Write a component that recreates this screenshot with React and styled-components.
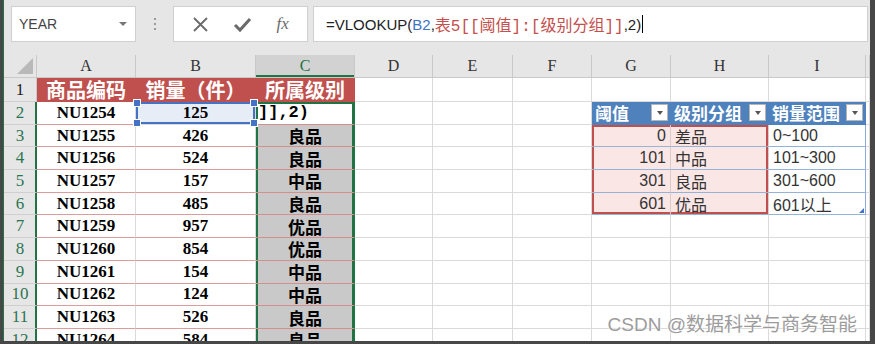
import styled, { createGlobalStyle } from 'styled-components';

const SERIF = `"Liberation Serif", "Noto Sans CJK SC", serif`;
const SANS = `"Liberation Sans", "Noto Sans CJK SC", sans-serif`;
const MONO = `"Liberation Mono", "Noto Sans CJK SC", monospace`;

const GREEN = '#217346';
const RED = '#c0504d';
const BLUE = '#4f81bd';
const GRID = '#dadada';

const GlobalStyle = createGlobalStyle`
  html, body {
    margin: 0;
    padding: 0;
    background: #fff;
  }
  body {
    width: 875px;
    height: 344px;
    overflow: hidden;
    font-family: ${SANS};
  }
`;

// inset edges drawn with box-shadow so cell sizes stay fixed
const edges = (color, w, { t, r, b, l }) => {
  const s = [];
  if (t) s.push(`inset 0 ${w}px 0 ${color}`);
  if (r) s.push(`inset -${w}px 0 0 ${color}`);
  if (b) s.push(`inset 0 -${w}px 0 ${color}`);
  if (l) s.push(`inset ${w}px 0 0 ${color}`);
  return s.length ? s.join(', ') : 'none';
};

const Frame = styled.div`
  position: relative;
  width: 875px;
  height: 344px;
  box-sizing: border-box;
  border-left: 3px solid #474747;
  border-right: 5px solid #474747;
  border-bottom: 3px solid #474747;
  padding-left: 1px;
  background: ${GREEN};
  display: flex;
  flex-direction: column;
  overflow: hidden;
`;

const Toolbar = styled.div`
  height: 55px;
  flex-shrink: 0;
  background: #e6e6e6;
  display: flex;
  align-items: flex-start;
  padding: 6px 2px 0 7px;
  box-sizing: border-box;
`;

const Box = styled.div`
  height: 36px;
  box-sizing: border-box;
  background: #fff;
  border: 1px solid #d0d0d0;
  display: flex;
  align-items: center;
`;

const NameBox = styled(Box)`
  width: 125px;
  padding: 0 8px 0 7px;
  justify-content: space-between;
  font-size: 14px;
  color: #444;
`;

const Caret = styled.span`
  width: 0;
  height: 0;
  border-left: 4px solid transparent;
  border-right: 4px solid transparent;
  border-top: 4px solid #777;
`;

const Grip = styled.div`
  width: 37px;
  height: 36px;
  display: flex;
  flex-direction: column;
  align-items: center;
  justify-content: center;
  gap: 3px;

  span {
    width: 2px;
    height: 2px;
    background: #9a9a9a;
  }
`;

const ButtonBox = styled(Box)`
  width: 135px;
  justify-content: space-around;
  padding: 0 6px;
  color: #6a6a6a;
`;

const Fx = styled.span`
  font-family: ${SERIF};
  font-style: italic;
  font-size: 17px;
  color: #6a6a6a;
`;

const FormulaBox = styled(Box)`
  flex: 1;
  margin-left: 5px;
  padding-left: 12px;
  font-size: 15px;
  color: #222;
  white-space: nowrap;
`;

const Ref = styled.span`
  color: ${(p) => (p.$tone === 'blue' ? '#3f73c4' : '#c4504e')};
  font-family: ${(p) => (p.$tone === 'blue' ? SANS : MONO)};
  font-size: ${(p) => (p.$tone === 'blue' ? '15px' : '16px')};
`;

const Cursor = styled.span`
  display: inline-block;
  width: 1px;
  height: 18px;
  background: #000;
  margin-left: 1px;
  vertical-align: -4px;
`;

const Sheet = styled.div`
  flex: 1;
  background: #fff;
  display: grid;
  grid-template-columns: 33px 99px 120px 99px 78px 80px 79px 79px 98px 97px 4px;
  grid-template-rows: 23px 24px repeat(11, 22.7px);
  overflow: hidden;
`;

const Cell = styled.div`
  box-sizing: border-box;
  border-right: 1px solid ${GRID};
  border-bottom: 1px solid ${GRID};
  display: flex;
  align-items: center;
  overflow: hidden;
  white-space: nowrap;
  min-width: 0;
`;

const ColHead = styled(Cell)`
  justify-content: center;
  background: ${(p) => (p.$active ? '#d2d2d2' : '#e6e6e6')};
  border-color: #c9c9c9;
  color: ${(p) => (p.$active ? GREEN : '#333')};
  box-shadow: ${(p) => (p.$active ? `inset 0 -2px 0 ${GREEN}` : 'none')};
  font-family: ${SERIF};
  font-size: 16px;
`;

const Corner = styled(Cell)`
  background: #e6e6e6;
  border-color: #c9c9c9;
  justify-content: flex-end;
  align-items: flex-end;
  padding: 0 3px 3px 0;

  &::after {
    content: '';
    width: 0;
    height: 0;
    border-left: 16px solid transparent;
    border-bottom: 16px solid #b9b9b9;
  }
`;

const RowHead = styled(Cell)`
  justify-content: center;
  background: #e6e6e6;
  border-color: #cfcfcf;
  border-right-color: ${(p) => (p.$active ? GREEN : '#c9c9c9')};
  box-shadow: ${(p) => (p.$active ? `inset -1px 0 0 ${GREEN}` : 'none')};
  color: ${(p) => (p.$active ? '#2c7552' : '#222')};
  font-family: ${SERIF};
  font-size: 17px;
`;

const TitleCell = styled(Cell)`
  justify-content: center;
  background: ${RED};
  border-color: ${RED};
  color: #fff;
  font-family: ${SERIF};
  font-weight: bold;
  font-size: 20px;
`;

const ItemCell = styled(Cell)`
  justify-content: center;
  border-bottom-color: #dc9c9b;
  font-family: ${SERIF};
  font-weight: bold;
  font-size: 17px;
  color: #000;
`;

const RefCell = styled(ItemCell)`
  position: relative;
  overflow: visible;
  background: #e7edf7;
  border-bottom-color: ${GRID};
  box-shadow: inset 0 0 0 2px #4472c4;
  z-index: 2;
`;

const Handle = styled.span`
  position: absolute;
  width: 6px;
  height: 6px;
  background: #4472c4;
  border: 1px solid #fff;
  ${(p) => (p.$y === 'top' ? 'top: -3px;' : 'bottom: -3px;')}
  ${(p) => (p.$x === 'left' ? 'left: -3px;' : 'right: -3px;')}
`;

const GradeCell = styled(Cell)`
  justify-content: ${(p) => (p.$editing ? 'flex-start' : 'center')};
  padding-left: ${(p) => (p.$editing ? '2px' : '0')};
  background: ${(p) => (p.$editing ? '#fff' : '#c9c9c9')};
  border-right-color: ${GREEN};
  border-bottom-color: #d28f8e;
  box-shadow: ${(p) => edges(GREEN, 2, { l: true, r: true, t: p.$editing })};
  font-family: ${(p) => (p.$editing ? MONO : SERIF)};
  font-weight: bold;
  font-size: 17px;
  color: #000;
`;

const TierHead = styled(Cell)`
  background: ${BLUE};
  border-color: ${BLUE};
  color: #fff;
  font-family: ${SERIF};
  font-weight: bold;
  font-size: 17px;
  padding: 0 2px 0 3px;
  gap: 2px;
`;

const HeadLabel = styled.span`
  flex: 1;
  min-width: 0;
  overflow: hidden;
`;

const FilterButton = styled.span`
  flex-shrink: 0;
  width: 17px;
  height: 17px;
  box-sizing: border-box;
  background: #fff;
  border: 1px solid #b5b5b5;
  display: flex;
  align-items: center;
  justify-content: center;

  &::after {
    content: '';
    width: 0;
    height: 0;
    border-left: 3.5px solid transparent;
    border-right: 3.5px solid transparent;
    border-top: 4px solid #555;
  }
`;

const TierCell = styled(Cell)`
  position: relative;
  overflow: visible;
  justify-content: ${(p) => (p.$align === 'right' ? 'flex-end' : 'flex-start')};
  padding: 0 4px;
  background: ${(p) => (p.$pink ? '#fbe6e6' : '#fff')};
  border-right-color: ${(p) => (p.$edge ? '#8eaadb' : '#d9cccc')};
  border-bottom-color: #95b3d7;
  box-shadow: ${(p) => edges(RED, 2, p.$box || {})};
  font-size: 16px;
  color: #333;
`;

const ResizeMark = styled.span`
  position: absolute;
  right: 1px;
  bottom: 1px;
  width: 0;
  height: 0;
  border-left: 5px solid transparent;
  border-bottom: 5px solid #4472c4;
`;

const Watermark = styled.div`
  position: absolute;
  right: 13px;
  bottom: 5px;
  font-family: ${SANS};
  font-size: 19px;
  color: #9c9c9c;
  text-shadow: 0 0 2px #fff, 0 0 2px #fff;
  pointer-events: none;
`;

const columns = ['A', 'B', 'C', 'D', 'E', 'F', 'G', 'H', 'I'];

const items = [
  ['NU1254', 125, null],
  ['NU1255', 426, '良品'],
  ['NU1256', 524, '良品'],
  ['NU1257', 157, '中品'],
  ['NU1258', 485, '良品'],
  ['NU1259', 957, '优品'],
  ['NU1260', 854, '优品'],
  ['NU1261', 154, '中品'],
  ['NU1262', 124, '中品'],
  ['NU1263', 526, '良品'],
  ['NU1264', 584, '良品'],
];

const tiers = [
  [0, '差品', '0~100'],
  [101, '中品', '101~300'],
  [301, '良品', '301~600'],
  [601, '优品', '601以上'],
];

function CloseIcon() {
  return (
    <svg width="17" height="17" viewBox="0 0 17 17">
      <path d="M2 2 L15 15 M15 2 L2 15" stroke="#6a6a6a" strokeWidth="1.8" fill="none" />
    </svg>
  );
}

function CheckIcon() {
  return (
    <svg width="19" height="17" viewBox="0 0 19 17">
      <path d="M2 9 L7 14 L17 3" stroke="#6a6a6a" strokeWidth="3" fill="none" />
    </svg>
  );
}

function TierRow({ tier, index }) {
  const first = index === 0;
  const last = index === tiers.length - 1;
  const [value, group, range] = tier;
  return (
    <>
      <TierCell $pink $align="right" $box={{ l: true, t: first, b: last }}>
        {value}
      </TierCell>
      <TierCell $pink $box={{ r: true, t: first, b: last }}>
        {group}
      </TierCell>
      <TierCell $edge>
        {range}
        {last && <ResizeMark />}
      </TierCell>
    </>
  );
}

function App() {
  return (
    <>
      <GlobalStyle />
      <Frame>
        <Toolbar>
          <NameBox>
            YEAR
            <Caret />
          </NameBox>
          <Grip>
            <span />
            <span />
            <span />
          </Grip>
          <ButtonBox>
            <CloseIcon />
            <CheckIcon />
            <Fx>fx</Fx>
          </ButtonBox>
          <FormulaBox>
            =VLOOKUP(<Ref $tone="blue">B2</Ref>,
            <Ref>表5[[阈值]:[级别分组]]</Ref>,2)
            <Cursor />
          </FormulaBox>
        </Toolbar>

        <Sheet>
          <Corner />
          {columns.map((c) => (
            <ColHead key={c} $active={c === 'C'}>
              {c}
            </ColHead>
          ))}
          <ColHead />

          <RowHead>1</RowHead>
          <TitleCell>商品编码</TitleCell>
          <TitleCell>销量（件）</TitleCell>
          <TitleCell>所属级别</TitleCell>
          {columns.slice(3).map((c) => (
            <Cell key={c} />
          ))}
          <Cell />

          {items.map(([code, qty, grade], i) => {
            const row = i + 2;
            const tier = i >= 1 && i <= 4 ? tiers[i - 1] : null;
            return (
              <RowFragment key={code}>
                <RowHead $active>{row}</RowHead>
                <ItemCell>{code}</ItemCell>
                {row === 2 ? (
                  <RefCell>
                    {qty}
                    <Handle $y="top" $x="left" />
                    <Handle $y="top" $x="right" />
                    <Handle $y="bottom" $x="left" />
                    <Handle $y="bottom" $x="right" />
                  </RefCell>
                ) : (
                  <ItemCell>{qty}</ItemCell>
                )}
                {grade ? (
                  <GradeCell>{grade}</GradeCell>
                ) : (
                  <GradeCell $editing>]],2)</GradeCell>
                )}
                <Cell />
                <Cell />
                <Cell />
                {row === 2 && (
                  <>
                    <TierHead>
                      <HeadLabel>阈值</HeadLabel>
                      <FilterButton />
                    </TierHead>
                    <TierHead>
                      <HeadLabel>级别分组</HeadLabel>
                      <FilterButton />
                    </TierHead>
                    <TierHead>
                      <HeadLabel>销量范围</HeadLabel>
                      <FilterButton />
                    </TierHead>
                  </>
                )}
                {tier && <TierRow tier={tier} index={i - 1} />}
                {row > 6 && (
                  <>
                    <Cell />
                    <Cell />
                    <Cell />
                  </>
                )}
                <Cell />
              </RowFragment>
            );
          })}
        </Sheet>

        <Watermark>CSDN @数据科学与商务智能</Watermark>
      </Frame>
    </>
  );
}

function RowFragment({ children }) {
  return <>{children}</>;
}

export default App;
